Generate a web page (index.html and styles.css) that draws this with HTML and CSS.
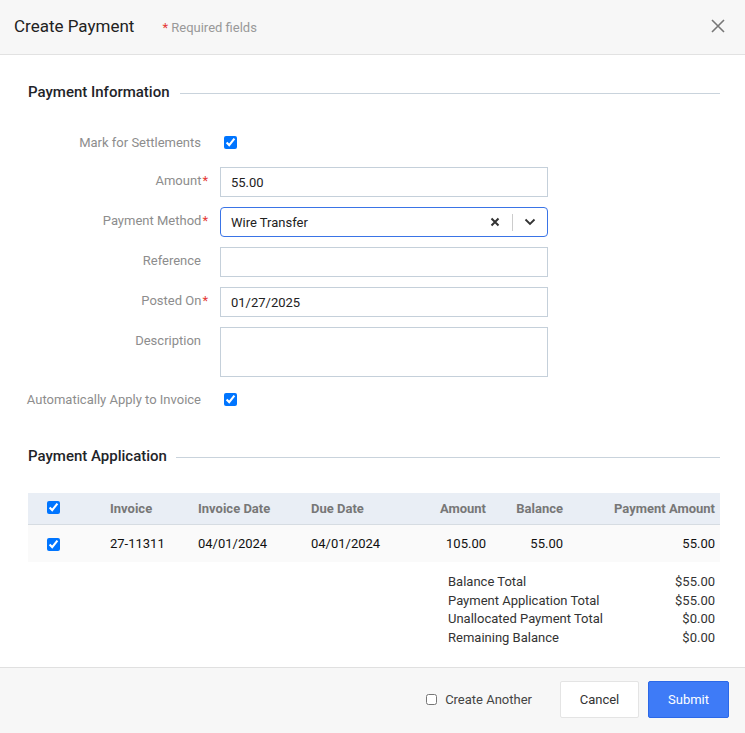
FILE: index.html
```html
<!DOCTYPE html>
<html>
<head>
<meta charset="utf-8">
<link rel="stylesheet" href="styles.css">
</head>
<body>
<div class="modal">
  <header class="head">
    <h1 class="title">Create Payment</h1>
    <span class="req"><span class="star">*</span> Required fields</span>
    <svg class="close" width="14" height="14" viewBox="0 0 14 14"><path d="M1 1L13 13M13 1L1 13" stroke="#777" stroke-width="1.6" fill="none"/></svg>
  </header>
  <main class="body">
    <div class="section"><h2>Payment Information</h2><span class="rule"></span></div>
    <div class="form">
      <div class="row chk first"><label>Mark for Settlements</label><input type="checkbox" checked></div>
      <div class="row"><label>Amount<span class="star">*</span></label><div class="input">55.00</div></div>
      <div class="row"><label>Payment Method<span class="star">*</span></label>
        <div class="input select"><span class="val">Wire Transfer</span>
          <svg class="clear" width="10" height="10" viewBox="0 0 10 10"><path d="M1.5 1.5L8.5 8.5M8.5 1.5L1.5 8.5" stroke="#333" stroke-width="2" fill="none"/></svg>
          <span class="sep"></span>
          <svg class="chev" width="12" height="8" viewBox="0 0 12 8"><path d="M1.5 1.5L6 6L10.5 1.5" stroke="#333" stroke-width="1.8" fill="none"/></svg>
        </div>
      </div>
      <div class="row"><label>Reference</label><div class="input"></div></div>
      <div class="row"><label>Posted On<span class="star">*</span></label><div class="input">01/27/2025</div></div>
      <div class="row"><label>Description</label><div class="input area"></div></div>
      <div class="row chk auto"><label>Automatically Apply to Invoice</label><input type="checkbox" checked></div>
    </div>
    <div class="section sec2"><h2>Payment Application</h2><span class="rule"></span></div>
    <table class="grid">
      <thead>
        <tr><th class="c0"><input type="checkbox" checked></th><th class="c1">Invoice</th><th class="c2">Invoice Date</th><th class="c3">Due Date</th><th class="c4 r">Amount</th><th class="c5 r">Balance</th><th class="c6 r">Payment Amount</th></tr>
      </thead>
      <tbody>
        <tr><td class="c0"><input type="checkbox" checked></td><td>27-11311</td><td>04/01/2024</td><td>04/01/2024</td><td class="r">105.00</td><td class="r">55.00</td><td class="r">55.00</td></tr>
      </tbody>
    </table>
    <div class="totals">
      <div class="trow"><span>Balance Total</span><span>$55.00</span></div>
      <div class="trow"><span>Payment Application Total</span><span>$55.00</span></div>
      <div class="trow"><span>Unallocated Payment Total</span><span>$0.00</span></div>
      <div class="trow"><span>Remaining Balance</span><span>$0.00</span></div>
    </div>
  </main>
  <footer class="foot">
    <label class="another"><input type="checkbox"> Create Another</label>
    <button class="btn cancel">Cancel</button>
    <button class="btn submit">Submit</button>
  </footer>
</div>
</body>
</html>
```
FILE: styles.css
```css
* { box-sizing: border-box; }
html, body { margin: 0; padding: 0; }
body { font-family: Roboto, "Liberation Sans", sans-serif; color: #212529; background: #fff; width: 745px; height: 733px; overflow: hidden; }
.modal { display: flex; flex-direction: column; height: 733px; }
.head { height: 55px; background: #f7f7f7; border-bottom: 1px solid #e2e2e2; display: flex; align-items: center; padding: 0 20px 0 14px; }
.title { font-size: 17px; font-weight: 400; margin: 0; color: #222; line-height: 20px; padding-bottom: 3px; }
.req { margin-left: 28px; font-size: 13px; color: #999; }
.star { color: #e53935; }
.close { margin-left: auto; margin-bottom: 2px; }
.body { flex: 1; padding: 27px 25px 0 28px; }
.section { display: flex; align-items: center; height: 20px; }
.section h2 { margin: 0; font-size: 15px; font-weight: 500; color: #1f2429; white-space: nowrap; }
.rule { flex: 1; height: 1px; background: #c9d3dc; margin-left: 10px; margin-top: 2px; }
.form { padding-top: 27px; display: flex; flex-direction: column; gap: 10px; margin-left: -28px; }
.row { display: flex; align-items: flex-start; }
.row label { width: 201px; text-align: right; font-size: 13px; color: #8d8d8d; padding-top: 6px; line-height: 15px; flex-shrink: 0; white-space: nowrap; }
.row label .star { margin-right: -7px; margin-left: 1px; }
.row .input { margin-left: 19px; width: 328px; height: 30px; border: 1px solid #c5d0da; font-size: 13px; padding: 0 10px; display: flex; align-items: center; color: #222; }
.row.chk { align-items: center; height: 26px; }
.row.chk.first { margin-bottom: 2px; }
.row.chk label { padding-top: 0; }
.row.chk input { margin: 0 0 0 23px; width: 13px; height: 13px; }
.row.auto { margin-top: -1px; }
.input.area { height: 50px; }
.input.select { border-color: #3a74e6; border-radius: 4px; padding-right: 11px; }
.select .val { flex: 1; }
.select .clear { margin-right: 12px; }
.select .sep { width: 1px; height: 17px; background: #ccc; margin-right: 11px; }
.sec2 { margin-top: 34px; }
.sec2 .rule { margin-left: 9px; }
.grid { margin-top: 27px; width: 692px; border-collapse: collapse; font-size: 13px; }
.grid th { background: #e9eef5; height: 31px; font-weight: 700; color: #777; text-align: left; border-bottom: 1px solid #d6dce2; padding: 0; }
.grid td { background: #fafafa; height: 38px; padding: 0; color: #111; }
.grid .r { text-align: right; }
.grid .c0 { width: 82px; padding-left: 19px; }
.grid th.c0 { padding-top: 0; vertical-align: middle; }
.grid input { margin: 0; width: 13px; height: 13px; vertical-align: middle; }
.grid thead input { position: relative; top: -2px; }
.grid .c1 { width: 88px; }
.grid .c2 { width: 113px; }
.grid .c3 { width: 93px; }
.grid .c4 { width: 82px; }
.grid .c5 { width: 77px; }
.grid .c6 { padding-right: 5px; }
.grid td:last-child { padding-right: 5px; }
.totals { margin-left: 420px; margin-top: 11px; width: 267px; font-size: 13px; color: #333; }
.trow { display: flex; justify-content: space-between; line-height: 18.7px; }
.foot { height: 66px; background: #f7f7f7; border-top: 1px solid #e0e0e0; display: flex; align-items: center; justify-content: flex-end; padding: 0 16px 2px 0; }
.another { display: flex; align-items: center; font-size: 13px; color: #444; margin-right: 28px; }
.another input { margin: 0 8px 0 0; width: 11px; height: 11px; }
.btn { font-family: inherit; font-size: 13px; height: 37px; border-radius: 2px; cursor: pointer; }
.cancel { width: 79px; background: #fff; border: 1px solid #e4e4e4; color: #333; margin-right: 9px; }
.submit { width: 81px; background: #3e7bf7; border: 1px solid #2b68e8; color: #fff; }
```
